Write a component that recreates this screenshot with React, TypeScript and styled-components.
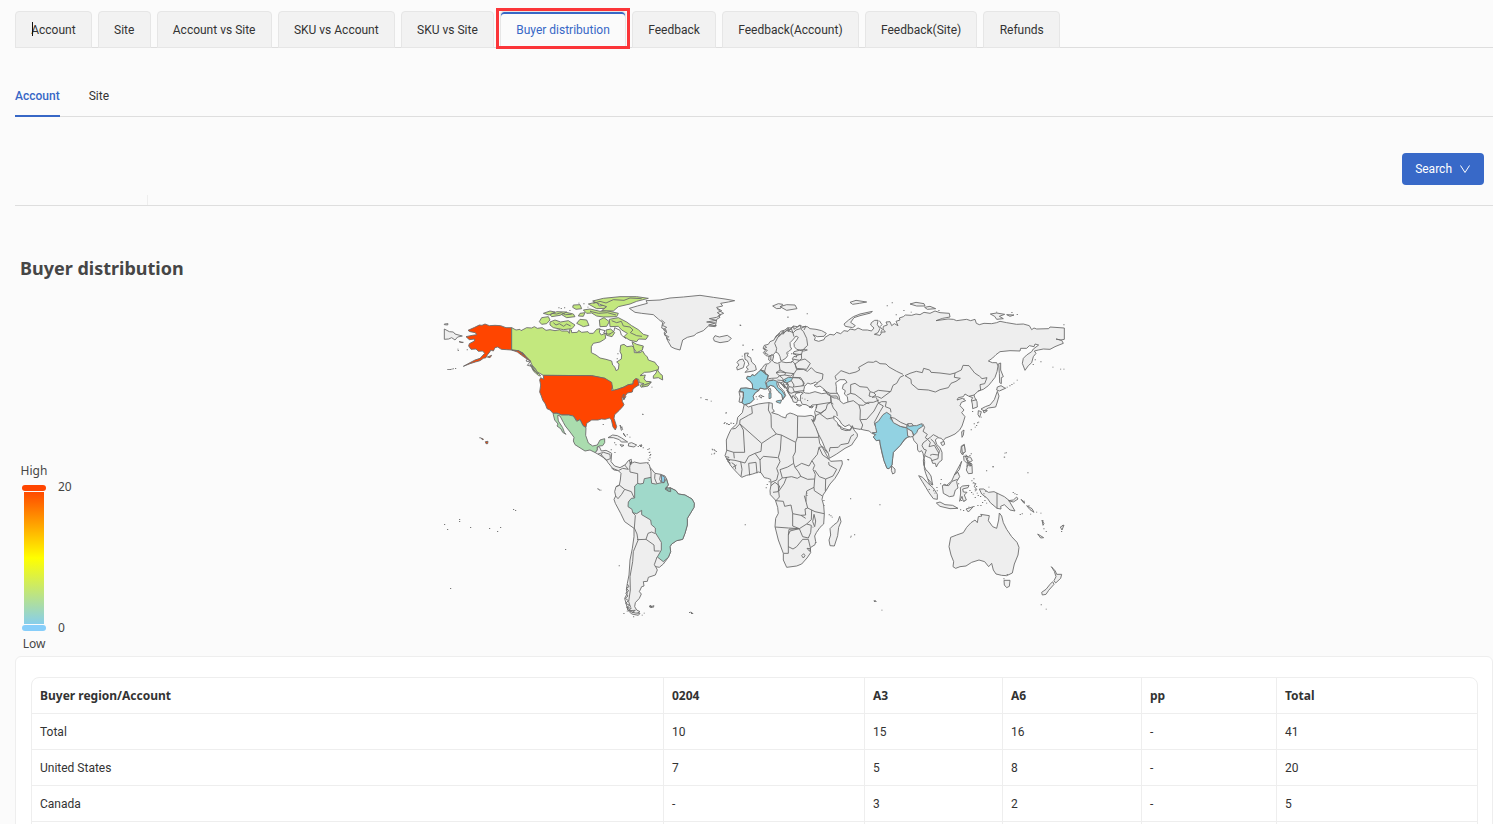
import React, { useState } from "react";
import styled, { createGlobalStyle, css } from "styled-components";

const GlobalStyle = createGlobalStyle`
  *, *::before, *::after { box-sizing: border-box; }
  body {
    margin: 0;
    background: #fbfbfb;
    color: #333;
    font: 12px/20px Roboto, "Noto Sans", sans-serif;
  }
  button { font: inherit; color: inherit; cursor: pointer; }
`;

const Page = styled.main`
  height: 100vh;
  overflow: hidden;
  padding: 11px 0 0 15px;
`;

const TabBar = styled.nav`
  border-bottom: 1px solid #dedede;
`;

const TabList = styled.div`
  display: flex;
  gap: 6px;
  max-width: 1045px;
  margin-bottom: -1px;
`;

const Tab = styled.button<{ $active?: boolean; $caret?: boolean }>`
  position: relative;
  flex: 1 0 auto;
  height: 37px;
  padding: 0 15px;
  border: 1px solid #e6e6e6;
  border-radius: 4px 4px 0 0;
  background: #f2f2f2;
  white-space: nowrap;
  ${(p) =>
    p.$active &&
    css`
      background: #fbfbfb;
      border-bottom-color: #fbfbfb;
      box-shadow: inset 0 2px #3767c6;
      color: #3767c6;
      &::after {
        content: "";
        position: absolute;
        z-index: 1;
        inset: -4px -5px -2px;
        border: 3px solid #fb3539;
      }
    `}
  ${(p) =>
    p.$caret &&
    css`
      &::before {
        content: "";
        position: absolute;
        left: 16px;
        top: 10px;
        width: 1px;
        height: 14px;
        background: #111;
      }
    `}
`;

const SubTabs = styled.nav`
  display: flex;
  gap: 29px;
  margin-top: 27px;
  border-bottom: 1px solid #dedede;
`;

const SubTab = styled.button<{ $active?: boolean }>`
  height: 42px;
  margin-bottom: -1px;
  padding: 2px 0 0;
  border: 0;
  border-bottom: 2px solid ${(p) => (p.$active ? "#3767c6" : "transparent")};
  background: none;
  color: ${(p) => (p.$active ? "#3767c6" : "#333")};
  font-weight: ${(p) => (p.$active ? 500 : 400)};
`;

const FilterPanel = styled.section`
  display: flex;
  justify-content: space-between;
  padding: 36px 9px 0 0;
  border-bottom: 1px solid #dedede;
`;

const FilterStub = styled.div`
  align-self: flex-end;
  width: 133px;
  height: 10px;
  border-right: 1px solid #eee;
`;

const SearchButton = styled.button`
  display: flex;
  align-items: center;
  gap: 7px;
  height: 32px;
  margin-bottom: 20px;
  padding: 0 13px;
  border: 0;
  border-radius: 4px;
  background: #3869c8;
  color: #fff;
`;

const ChartTitle = styled.h2`
  margin: 50px 0 10px 5px;
  color: #464646;
  font: bold 18px/24px "Noto Sans", sans-serif;
`;

const ChartArea = styled.section`
  display: grid;
  grid-template-columns: 1fr;
  padding-bottom: 4px;
  & > * { grid-area: 1 / 1; }
`;

const MapDrawing = styled.svg`
  justify-self: center;
  width: 628px;
  height: 330px;
  margin-bottom: 32px;
`;

const Legend = styled.div`
  display: grid;
  grid-template-columns: 28px auto;
  column-gap: 10px;
  place-content: end start;
  margin-left: 5px;
  color: #464646;
  font: 12px/16px "Noto Sans", sans-serif;
`;

const LegendEnd = styled.span`
  grid-column: 1;
  text-align: center;
`;

const Scale = styled.div`
  grid-column: 1;
  display: flex;
  flex-direction: column;
  align-items: center;
  gap: 1px;
  padding: 6px 0 5px;
`;

const Handle = styled.span<{ $color: string }>`
  width: 24px;
  height: 6px;
  border-radius: 3px;
  background: ${(p) => p.$color};
`;

const Gradient = styled.span`
  width: 20px;
  height: 132px;
  background: linear-gradient(#ff4a00, yellow 50%, #87ceeb);
`;

const ScaleLabels = styled.div`
  display: flex;
  flex-direction: column;
  justify-content: space-between;
`;

const Card = styled.section`
  padding: 20px 14px 20px 15px;
  border: 1px solid #eee;
  border-radius: 6px;
  background: #fff;
`;

const DataTable = styled.table`
  width: 100%;
  table-layout: fixed;
  border-collapse: separate;
  border-spacing: 0;
  border: 1px solid #eee;
  border-radius: 8px;
`;

const Column = styled.col<{ $width?: number }>`
  width: ${(p) => (p.$width ? `${p.$width}px` : "auto")};
`;

const cell = css`
  height: 36px;
  padding: 0 8px;
  border-bottom: 1px solid #eee;
  border-right: 1px solid #eee;
  text-align: left;
  &:last-child { border-right: 0; }
`;

const HeadCell = styled.th`
  ${cell}
  font: bold 12px/20px "Noto Sans", sans-serif;
`;

const Cell = styled.td`
  ${cell}
`;

/* Outlines are digitised at three units per map unit, each relative to a sheet's corner. */
type Sheet = [number, number];
const NA: Sheet = [440, 290];
const ATL: Sheet = [600, 290];
const EUR: Sheet = [720, 310];
const ASIA: Sheet = [850, 290];
const SAM: Sheet = [590, 440];
const AFR: Sheet = [715, 400];
const OCE: Sheet = [860, 420];

const pts = (s: Sheet, text: string) =>
  text
    .trim()
    .split(/\s+/)
    .map((p) => {
      const [x, y] = p.split(",").map(Number);
      return `${(s[0] + x / 3).toFixed(2)},${(s[1] + y / 3).toFixed(2)}`;
    })
    .join(" ");

const LAND = "#eeeeee";
const SEA = "#fbfbfb";

const eurasia = [
  pts(EUR, "57,245 62,235 78,234 98,237 97,222 90,213 80,206 82,199 92,200 96,194 104,197 115,187 122,180 128,172 135,163 146,161 152,155 146,150 147,138 156,135 160,140 156,150 162,157 172,160 184,155 198,158 212,157 220,152 217,146 222,139 230,141 228,134 219,131 222,125 238,121 252,123 262,120 256,118 240,120 230,118 223,110 222,100 230,90 235,82 228,78 218,90 210,98 211,110 215,117 206,124 200,128 203,137 197,145 187,151 182,151 180,140 175,130 167,126 160,134 148,139 138,137 130,128 136,121 129,115 133,106 145,103 150,95 162,90 168,78 176,72 182,64 195,60 203,53 213,54 220,48 232,50 240,45 247,50 262,50 270,56 288,58 305,62 319,70 312,79 292,80 279,74 286,83 283,90 296,94 312,89 315,82 330,73 342,75 350,67 362,71 372,62 384,64 390,57 405,60 414,54 428,60 442,60 455,63"),
  pts(ASIA, "66,121 72,114 62,105 64,98 74,91 84,91 82,104 90,116 84,128 73,133 90,136 96,126 106,126 99,117 100,109 112,105 108,96 120,95 125,107 133,101 144,107 138,94 150,90 148,84 160,80 166,75 185,76 198,72 210,74 222,67 240,70 255,63 270,68 298,70 300,81 278,85 258,92 294,87 310,88 320,92 350,88 362,92 375,88 379,100 388,104 402,100 425,101 440,98 450,94 470,98 500,103 520,102 538,107 545,119 552,114 560,117 596,116 600,111 643,114 643,148 632,150 618,147 635,151 640,160 627,165 615,170 600,178 580,177 565,180 553,183 558,190 550,200 545,218 535,227 525,241 517,220 520,205 530,195 545,185 550,177 566,165 555,162 552,170 538,167 530,175 512,175 510,183 480,182 450,185 438,194 428,204 415,213 427,218 440,218 444,228 441,245 435,262 425,275 415,287 400,298 385,303 372,315 374,322 381,335 382,351 368,356 367,342 364,330 368,323 355,318 345,312 340,320 325,323 321,330 337,325 347,332 334,337 330,347 342,360 335,368 345,380 341,393 336,408 329,420 315,432 300,439 285,445 280,452 274,445 263,443 256,450 260,463 270,473 276,487 276,510 266,518 259,531 256,520 248,520 243,505 235,502 225,497 220,510 221,525 228,540"),
  pts(OCE, "204,155 213,168 218,195 208,190 203,176 197,160 193,145 194,125 189,100 185,92 178,96 173,90 172,73 162,62 156,45 150,50 142,52 135,58 120,77 100,97 98,115 96,135 87,146 81,145 72,122 66,100 61,75 59,60 49,62 40,51 47,44 35,40 28,33 12,30 0,27"),
  pts(EUR, "420,358 408,356 395,353 388,344 375,350 365,342 358,330 347,320 341,318 342,328 352,338 355,348 361,350 363,357 378,362 390,360 397,347 402,360 412,372 412,380 402,394 395,405 375,415 350,432 328,445 325,430 315,415 307,395 294,370 286,352 280,340 273,328 283,334 287,320 284,307 290,290 291,284 276,285 270,291 258,284 247,283 241,270 242,255 250,249 242,247 228,250 225,256 234,267 230,278 220,276 214,260 205,248 202,236 192,227 182,219 173,216 178,229 192,244 197,257 188,269 186,255 174,244 162,229 152,226 142,236 133,237 120,234 117,241 106,248 99,259 102,268 91,279 74,284 66,278 57,276 60,260"),
].join(" ");

const africa = pts(AFR, "88,12 100,21 130,12 150,9 162,8 172,10 172,25 178,34 170,38 190,44 200,50 212,54 215,44 225,39 235,42 248,48 270,49 288,46 297,50 295,65 290,58 302,82 310,103 314,130 325,147 340,175 347,184 381,182 382,192 372,215 360,235 345,252 333,272 324,285 321,298 326,316 328,342 326,372 315,382 304,398 299,408 302,425 300,434 286,443 287,458 276,474 260,492 245,498 215,502 205,480 205,460 190,420 180,380 182,355 190,340 188,322 181,300 166,284 165,272 168,255 167,238 158,235 148,233 138,218 130,216 113,222 95,226 80,232 68,220 54,205 46,195 36,178 30,167 35,152 34,120 40,105 48,88 65,72 68,52 82,38");
const southAmerica = pts(SAM, "95,82 105,75 115,62 124,58 124,70 133,66 150,70 170,68 178,74 180,82 195,100 212,103 225,108 230,118 235,135 225,147 230,150 240,143 258,152 265,162 285,165 306,177 313,190 312,202 300,222 292,235 292,255 285,280 278,298 260,302 245,312 240,320 242,335 235,352 220,372 208,382 197,380 202,390 196,405 175,412 172,424 160,425 162,438 155,440 148,455 154,462 148,475 136,488 134,500 140,510 150,515 138,522 122,515 113,508 108,490 104,475 112,460 109,450 112,430 117,405 120,360 127,325 132,290 132,265 104,245 92,220 76,190 72,178 77,168 74,155 78,140 88,135 91,120 93,100 85,92 72,90 65,84 75,84 85,90");
const alaska = pts(NA, "215,113 198,113 182,107 165,106 148,107 135,102 126,106 118,105 104,112 84,121 90,125 106,128 110,134 97,136 78,140 88,149 104,147 103,153 88,161 86,168 93,178 108,177 115,184 128,183 134,190 120,205 105,210 90,218 70,229 90,221 106,216 120,212 130,205 138,203 142,195 150,185 152,180 160,183 165,173 173,171 184,178 200,179 215,180");
const canada = pts(NA, "215,113 228,120 240,118 243,122 260,113 275,114 283,110 292,115 307,113 318,121 330,119 345,122 360,119 364,123 383,123 388,130 388,119 394,120 395,128 412,127 416,121 425,127 444,125 448,130 460,130 470,118 480,116 478,127 484,135 495,130 497,145 490,150 480,156 460,160 454,170 454,188 468,195 480,204 498,208 515,213 518,225 525,232 528,242 535,238 537,222 530,216 544,207 545,195 540,185 542,166 552,163 561,170 575,168 582,172 583,188 600,188 608,183 614,193 622,201 625,210 645,217 650,225 656,230 655,239 630,246 613,247 600,257 610,256 616,255 612,266 618,274 632,275 630,280 618,283 604,292 600,286 612,281 598,278 596,268 587,266 580,273 579,282 565,284 552,291 535,297 520,303 515,285 495,265 480,262 455,257 310,256 303,252 290,245 287,237 276,225 270,212 258,200 248,189 235,182 215,180");
const usa = pts(NA, "302,263 311,268 310,256 455,257 480,262 495,265 515,277 517,290 515,302 535,297 552,291 565,284 579,282 580,273 587,266 593,268 597,285 588,290 579,297 577,306 562,309 557,316 553,327 546,322 547,334 552,344 548,350 538,361 524,374 522,385 530,410 526,420 519,411 514,389 508,384 496,388 484,387 474,390 455,390 440,400 438,412 429,407 420,389 413,395 400,378 386,375 365,375 351,369 339,370 330,360 321,356 316,342 308,330 304,318 299,306 302,285 299,270");
const mexico = pts(NA, "339,370 351,370 365,375 386,375 400,378 410,394 420,389 429,407 438,413 437,436 445,459 458,468 472,465 480,450 494,446 494,458 488,467 478,468 472,471 472,480 466,488 450,480 435,483 405,464 400,453 402,442 388,423 376,408 370,397 360,378 353,376 355,393 368,413 373,427 378,433 368,427 363,417 351,408 354,402 344,390");
const greenland = pts(ATL, "88,55 112,48 142,40 138,32 180,30 210,24 250,21 300,16 340,22 375,27 404,32 385,36 362,40 368,48 350,52 355,60 371,70 356,76 360,82 350,88 346,110 325,108 310,122 290,130 282,137 262,142 248,150 240,180 225,176 214,171 203,152 198,138 192,129 199,120 185,114 188,98 176,88 160,74 125,70 105,67");
const australia = pts(OCE, "272,352 290,345 310,338 320,322 333,308 345,300 352,308 355,290 366,288 362,283 388,287 385,302 398,320 410,325 416,300 418,279 425,288 430,308 440,328 455,350 471,367 477,382 474,405 463,432 457,459 440,467 425,466 408,462 400,450 395,430 386,440 374,425 357,420 335,427 318,438 300,440 287,445 279,440 281,425 273,405 267,380");
const brazil = pts(SAM, "143,130 150,132 160,130 163,116 183,112 185,130 197,132 215,128 222,128 229,116 235,135 225,147 230,150 240,143 258,152 265,162 285,165 306,177 313,190 312,202 300,222 292,235 292,255 285,280 278,298 260,302 245,312 240,320 242,335 235,352 220,365 202,351 214,330 214,307 196,278 196,264 184,254 182,240 155,224 155,211 140,221 128,218 126,208 114,200 115,186 124,175 134,174 134,138");

type Shape = [string, string?];
const countries: Shape[] = [
  [eurasia], [africa], [southAmerica], [greenland], [australia],
  [alaska, "#ff4500"], [canada, "#c3e87e"], [usa, "#ff4500"], [mexico, "#aadcae"],
  // Canadian Arctic
  ...[
    "298,95 305,83 325,80 330,90 320,101 305,103",
    "330,96 345,90 362,96 385,92 405,105 396,116 370,119 340,113 330,105",
    "410,100 420,88 440,90 447,106 430,110",
    "362,72 378,67 400,72 405,80 380,83", "330,74 350,65 380,66 360,76 335,80",
    "310,70 330,63 345,66 327,75", "400,45 420,44 425,56 408,58 398,52",
    "420,70 435,68 430,79 415,78", "430,60 450,57 480,64 500,62 535,70 530,80 490,81 470,78 455,69 440,70",
    "445,42 470,36 478,48 500,44 495,55 470,56", "458,33 490,25 540,20 590,20 625,25 590,34 570,42 535,50 520,63 485,62 500,50 480,43",
    "478,90 492,83 508,95 500,109 480,110", "508,88 535,83 560,96 575,107 595,119 610,133 625,137 618,148 596,147 590,155 570,151 552,140 562,130 545,120 535,109 510,110",
    "498,120 512,117 524,128 516,140 500,136", "576,155 590,163 610,168 607,180 590,188 582,176",
    "640,258 648,249 652,239 660,251 667,256 668,270 655,263 640,265", "270,223 280,232 302,258 296,257 281,244",
    "608,286 620,283 634,276 624,288 607,291",
  ].map((d): Shape => [pts(NA, d), "#c3e87e"]),
  ...[
    "215,180 235,182 248,189 258,200 272,214 262,208 245,196 232,186", "136,455 144,454 143,461 138,461",
    "122,444 130,447 129,450", "57,155 70,157 66,158", "142,201 155,196 150,203",
  ].map((d): Shape => [pts(NA, d), "#ff4500"]),
  // Chukotka wrap-around, Central America and the Caribbean
  ...[
    "13,117 28,125 40,126 45,132 67,138 53,141 45,150 35,143 26,147 13,148", "13,102 24,101 23,105 13,104",
    "466,488 472,480 472,471 478,470 484,483 498,481 510,487 515,490 513,515 524,528 540,533 554,525 565,538 548,535 535,542 518,535 504,518 498,508 480,496",
    "504,443 518,435 532,437 545,444 563,456 544,456 538,449 520,443", "566,460 575,458 590,465 582,471 565,468",
    "540,464 552,466 545,470", "598,466 606,467 603,471", "540,405 548,418 544,421", "550,429 557,440 552,435",
  ].map((d): Shape => [pts(NA, d)]),
  [pts(ATL, "340,145 345,137 358,141 382,136 394,145 385,154 360,158 343,153")],
  ...["518,48 535,41 548,43 542,55 530,56", "540,50 560,44 585,45 591,56 560,61"].map((d): Shape => [pts(ATL, d)]),
  // Britain, Ireland and Mediterranean islands
  ...[
    "74,130 85,129 82,138 92,143 95,156 106,166 109,179 100,183 75,187 85,177 78,172 87,164 82,152 75,148",
    "57,150 68,147 74,158 70,173 52,180 50,171 57,165 51,157", "153,135 161,136 158,151 152,150",
    "116,259 121,255 128,258 124,263", "267,291 280,289 276,294", "228,283 245,286 238,289",
    "145,237 151,235 153,244 149,247",
  ].map((d): Shape => [pts(EUR, d)]),
  ...[
    "82,199 92,200 96,194 104,197 115,187 122,180 133,187 145,196 141,209 136,217 142,236 133,237 120,234 117,241 98,237 97,222 90,213 80,206",
    "62,235 78,234 98,237 117,241 106,248 99,259 102,268 91,279 74,284 66,278 70,260 70,246 60,245",
    "139,218 150,211 160,210 172,214 170,220 173,232 186,242 195,256 188,269 186,255 174,244 162,229 152,226 142,232",
    "147,249 153,248 153,264 147,266", "169,273 185,270 181,280 169,276",
    "190,210 205,202 218,203 214,212 200,219 190,216",
  ].map((d): Shape => [pts(EUR, d), "#92d2e2"]),
  [pts(EUR, "122,180 134,184 137,192 128,185"), "#a0d9ca"],
  // Russian Arctic, Japan, Sakhalin
  ...[
    "-18,102 -4,90 10,80 30,72 67,64 62,69 30,77 12,83 2,97 16,107 8,113 -14,109", "180,42 198,37 222,41 225,48 200,48",
    "224,52 240,49 257,56 232,58", "421,72 440,69 464,73 448,79 460,86 440,88 434,79", "470,74 492,75 480,79",
    "0,37 18,31 50,36 28,40 8,43", "446,221 452,219 452,240 460,260 454,263 454,281 449,278 448,250",
    "442,291 453,287 466,295 448,303 440,300", "442,304 447,318 441,339 437,351 415,354 402,363 393,357 406,350 420,345 433,329 438,315",
    "385,362 394,365 389,382 384,374", "400,362 412,362 402,369", "272,458 282,454 284,463 277,467", "335,425 342,420 340,435 336,442",
    "334,468 343,463 345,480 338,495 332,487", "341,498 352,500 360,514 351,520 342,511", "352,515 366,522 363,538 351,531",
  ].map((d): Shape => [pts(ASIA, d)]),
  [pts(ASIA, "75,400 85,394 99,374 110,367 123,376 121,386 132,397 151,409 170,414 171,403 181,407 200,407 215,401 218,409 204,418 200,428 192,436 186,424 174,417 176,440 165,446 150,467 130,487 128,505 126,525 117,536 111,535 102,512 91,465 89,450 79,452 70,441 77,434 67,428 80,427 77,413"), "#92d2e2"],
  [pts(ASIA, "123,382 134,385 152,397 171,405 170,413 151,409 130,398")],
  [pts(ASIA, "173,401 186,401 190,407 176,409")],
  [pts(ASIA, "171,415 186,424 191,438 182,441 173,438")],
  // Indonesia, Philippines, Oceania
  ...[
    "95,138 105,147 105,158 98,162 94,151", "176,167 188,172 202,188 220,204 232,223 232,238 220,236 207,218 198,203 187,185",
    "229,249 240,246 255,254 278,256 294,265 270,266 240,259", "247,197 254,193 260,196 275,183 284,163 294,157 299,170 290,185 294,204 286,210 281,228 268,230 250,220",
    "301,203 308,198 327,196 324,203 308,207 310,216 321,217 313,225 319,240 310,244 306,229 299,244 302,219",
    "358,207 371,207 385,217 402,215 433,230 448,242 451,249 465,273 450,270 433,254 422,259 423,267 411,265 391,248 383,236 365,222",
    "445,242 460,240 470,231 474,237 460,246", "305,80 313,75 316,96 307,100", "316,108 332,112 337,122 325,129", "323,135 336,137 337,160 325,161 319,150",
    "283,165 302,130 305,124 298,149", "318,267 340,260 325,276", "432,481 450,481 448,499 440,503 433,495",
    "574,440 586,453 590,463 605,463 602,475 587,489 582,482 588,470 583,454", "578,485 582,493 566,511 558,523 547,525 545,517 558,508 570,493",
    "483,238 495,248 492,250", "500,257 516,266 522,277 510,269", "533,342 551,353 542,354", "546,300 552,311 549,316", "601,321 612,315 606,330",
  ].map((d): Shape => [pts(OCE, d)]),
  [pts(AFR, "374,349 378,365 371,382 368,407 358,438 345,437 342,420 347,405 345,386 356,375 368,366")],
  [brazil, "#a0d9ca"],
  [pts(SAM, "214,105 225,112 222,128 215,126"), "#87ceeb"],
  [pts(SAM, "228,142 242,145 242,155 233,153"), "#83b5a8"],
  [pts(SAM, "112,502 122,515 136,519 150,520 145,526 125,522 113,510")],
  [pts(SAM, "177,499 183,496 182,503")],
  [pts(SAM, "183,500 192,497 190,502")],
  // Caspian and Black seas
  [pts(EUR, "347,218 360,209 375,209 381,217 370,224 367,236 376,242 373,252 382,260 384,276 370,281 360,273 357,258 349,245 349,230"), SEA],
  [pts(EUR, "250,245 254,229 263,219 271,222 279,220 286,216 292,221 282,226 290,231 300,228 315,240 320,249 305,251 285,245 268,250 256,249"), SEA],
];

const borders: string[] = [
  // Europe
  ...[
    "57,245 70,246 70,260 66,278", "133,187 137,172 140,164", "145,196 141,209 152,212 160,210", "122,180 134,184 137,193 145,196",
    "177,160 180,180 168,188 178,197 172,204 154,205 145,206", "180,180 197,188 222,191 230,179 225,162 218,154 212,158",
    "168,188 182,186 197,188 194,195 178,197 188,205 190,212 172,210", "194,195 212,198 222,191", "218,203 236,204 248,212 252,228",
    "200,219 207,230 218,232 223,246 240,243 253,242", "214,212 222,225 220,231 252,227", "182,219 192,214 205,222 201,236",
    "207,230 203,243 213,250 224,246 240,248", "222,191 218,202 242,203 253,220 245,228", "230,179 250,178 262,184 274,173 287,186 309,192 307,208 291,219",
    "225,162 230,175 260,178 271,160 255,147 240,151 225,162", "218,147 238,151 245,146 244,132 229,137", "219,131 244,134 248,121",
    "168,126 170,115 164,100 174,81 187,70 202,61 214,56 218,66 222,80", "202,61 220,68 228,60 241,56 250,64 260,85 263,106 250,118",
    "309,240 330,250 352,250", "320,251 332,259 333,277 290,284 288,294 291,292", "332,259 342,264 350,264 356,270", "318,247 335,258 350,258 355,266",
  ].map((d) => pts(EUR, d)),
  // Middle East and Central Asia
  ...[
    "333,277 322,283 318,298 302,309 288,304", "303,309 287,317 284,330", "333,277 340,294 350,306 352,318", "318,298 301,312 321,327 341,323", "340,282 334,277 332,260",
    "328,425 330,413 355,412 362,404 385,400 393,379 402,373", "353,342 369,355 391,361 397,349", "384,276 400,272 417,285 421,300 420,329 428,345 424,357",
    "421,329 440,328 462,303 474,280 485,275", "417,285 430,286 445,277 460,277 477,270", "381,255 392,250 405,253 425,268 435,278 448,281",
    "349,210 345,199 363,182 388,191 408,186 419,180 416,172 444,156 460,157 468,153 480,161 498,162 507,171 530,184 549,193",
    "392,250 392,224 405,220 420,230 442,232 450,245 461,248 475,241 512,245 519,226 530,220 540,202 552,196",
    "461,248 468,255 456,262 473,260 484,265 511,245", "450,246 447,258 455,260", "485,275 499,275 496,290 511,296 513,307", "469,263 476,280 490,288 480,305 463,337 465,347",
  ].map((d) => pts(EUR, d)),
  // East and South Asia
  ...[
    "165,257 180,250 199,244 217,248 221,235 239,240 243,247 270,249 300,253 315,249 313,262 331,265 318,274 303,280 295,293 270,299 256,306 235,300 204,298 184,281 183,268 165,257",
    "315,249 334,240 339,226 357,227 374,249 389,259 396,266 411,263 404,281 390,284 392,300 384,304", "372,315 357,319", "365,333 380,329",
    "218,401 224,412 219,424 232,433 226,443 233,448 219,459 216,467", "232,448 242,441 250,434 265,442", "233,448 241,457 237,470 253,466 266,489 264,506 245,512", "240,496 248,493 265,495", "216,467 222,478 229,480 223,497", "242,447 251,455 268,482 267,490",
  ].map((d) => pts(ASIA, d)),
  pts(OCE, "411,219 411,265"), pts(OCE, "250,195 266,197 276,184 293,178"), pts(OCE, "203,176 218,193"),
  // Africa
  ...[
    "110,20 112,40 100,46 75,60 74,72 62,85 52,87", "75,72 140,130 170,110 184,102 169,82 168,45 160,30 162,8", "85,90 89,157 56,157 34,150", "85,90 75,72",
    "248,48 247,112 310,112", "247,112 242,127 199,105 184,102", "242,127 241,156 234,170 236,190 240,202", "199,105 196,150 190,172 195,185 185,205 190,220 185,240 168,247",
    "140,130 138,154 120,160 101,169 90,189 75,185 60,181 35,178", "101,190 104,226", "101,190 123,187 126,220", "120,160 135,180 137,218", "135,180 145,169 188,173",
    "77,185 81,208 78,230", "56,157 58,175", "65,195 53,202", "50,188 60,195 62,208", "195,209 218,201 236,190", "195,209 202,234 189,244 191,274 207,251 215,231",
    "202,234 230,230 247,235 257,229 278,238 299,237 297,262 275,273", "240,202 250,215 258,230", "240,202 260,190 282,198 291,182 299,196 294,208 301,223 299,237",
    "291,182 307,163 312,142 323,165 342,178", "312,142 323,140 338,160", "299,210 313,230 332,237 354,228 365,208 342,195 341,186", "332,237 331,273",
    "297,262 298,272 322,288", "275,273 273,290 273,305 278,324 300,335 327,341", "273,305 268,287", "191,274 193,291 183,302 205,304 209,319 228,315 233,341 258,346 272,355",
    "258,346 272,345 270,327 278,324", "233,341 233,378 253,386 275,372 289,359 290,330", "180,381 220,384 252,386 225,393 220,405 220,460 206,460",
    "220,405 222,388 253,386 263,410 280,414 287,398 289,376 275,372", "220,440 234,447 245,440 263,418 280,418 286,443", "297,343 302,363 299,380 293,365 297,343", "276,445 286,446 284,454 276,445",
    "260,467 266,461 270,467 265,474 260,467", "168,257 180,247 194,258 189,275 174,277",
  ].map((d) => pts(AFR, d)),
  // South and Central America
  ...[
    "122,66 119,82 120,96 143,101 143,130", "180,82 183,95 183,113", "195,101 194,115 200,130", "212,103 209,118 214,128",
    "78,140 89,136 104,148 95,163 84,176 77,168", "104,148 124,155 132,173", "128,218 136,226 133,264 141,282 144,301 130,335 128,365 120,410 121,450 116,485 122,502",
    "141,299 168,298 174,280 185,276 196,281", "168,298 192,315 193,333 209,333", "201,351 193,374 197,381", "24,42 41,37 60,43 61,56 48,61 34,44", "36,41 32,47",
  ].map((d) => pts(SAM, d)),
  // ragged coasts
  pts(ATL, "184,90 194,98 187,106 200,112 190,119 201,126 192,134 206,140 200,147 210,151"),
  pts(ATL, "352,55 365,62 352,68 362,75 350,82 328,86 349,91 320,96 346,99 326,105 350,107"),
  pts(EUR, "165,85 178,70 176,80 190,63 189,73 205,54 204,65 221,49 222,58 240,46 243,55 258,48 252,60"),
  pts(EUR, "134,107 140,112 131,116 142,121 134,129 145,134"),
  pts(EUR, "178,215 195,235 190,220 207,248 200,240 215,265 219,256 228,268 222,260"),
  pts(SAM, "112,432 117,440 109,444 116,453 107,459 114,468 106,475 115,482 107,490 119,496 110,502 124,505 115,512 136,511 126,518"),
  pts(NA, "235,181 249,196 246,187 262,207 258,213 270,216 262,226 276,229 284,244 277,235 294,252"),
  pts(NA, "480,118 495,122 491,129 508,133 522,124 524,113 540,121 544,135 558,146"),
  pts(NA, "340,98 348,105 358,101 371,109 380,102 392,108"),
  pts(NA, "335,70 350,72 364,68 376,74 395,73"), pts(NA, "460,40 480,34 498,39 520,29 552,31 570,24 605,26"), pts(NA, "450,64 476,70 502,68 528,75"),
  pts(NA, "515,92 530,98 544,94 550,108 570,111 579,120 571,128 590,137 606,139"),
  pts(NA, "546,320 552,312 551,330 558,319"),
  pts(AFR, "33,170 42,172 36,178 45,181 38,184 47,190"),
  pts(SAM, "118,60 122,75 125,64 120,72"),
  pts(OCE, "318,104 324,112 320,120 328,124 324,132 333,130 330,140"),
  pts(OCE, "340,186 346,192 343,200 350,208 346,214"),
  pts(ASIA, "88,92 96,104 90,110 97,118 92,128"),
];

const specks: [Sheet, string][] = [
  [NA, "22,237 26,237 30,237 34,236 38,235 45,234 52,176 53,180 80,178 118,442 606,371 522,457 526,463 593,468 608,472 626,475 628,485 630,492 628,502 626,510 622,516 634,290 430,40 442,50 415,38 355,52 362,54 372,52 388,60 450,62 545,410 560,433 568,440 488,402 530,205 532,190 508,130 606,172 612,262"],
  [ATL, "419,104 428,164 456,178 301,322 316,327 320,328 332,332 377,367 373,396 380,400 386,402 393,398 399,399 127,372 335,476 343,480 341,490 333,491 470,326 482,322 562,80 620,70"],
  [EUR, "59,44 67,104 96,118 202,20 383,448 261,270 253,266 245,263 235,270 195,210 197,222 72,133 65,137 203,128 213,130 107,259 129,258"],
  [ASIA, "110,46 125,37 137,73 160,60 182,65 571,214 607,230 630,236 640,236 640,103 554,208 548,222 465,293 470,290 478,286 484,282 490,278 500,269 381,397 374,410 362,418 463,488 461,500 428,529 392,380 366,363 340,325 265,60 484,66 500,72 438,65"],
  [OCE, "378,151 397,139 502,157 437,97 432,110 58,253 41,541 44,541 46,543 42,543 64,569 542,553 557,566 341,10 348,15 354,5 338,188 345,190 348,198 344,208 350,218 338,221 328,210 333,216 353,225 360,228 344,231 373,229 373,240 378,248 366,246 340,175 334,181 242,177 240,190 229,201 230,211 300,268 309,270 325,260 340,258 352,255 361,255 311,242 485,280 479,282 528,275 541,278 491,242 505,256 510,281 463,220 458,216 469,222 550,325 557,333 547,301 440,462 430,475 332,100 328,105 321,120 326,132 206,207 215,192 223,218 219,211 385,200 376,213 370,220 303,240 294,190"],
  [AFR, "31,38 26,69 33,70 39,72 45,68 152,262 155,252 161,244 89,373 341,343 346,346 350,350 405,410 407,407 417,403 405,295 397,177 399,178 274,278 274,285 325,300 325,315 292,380 301,426 2,153 -4,148"],
  [SAM, "22,145 25,147 27,149 31,149 86,376 300,515 303,516 306,519 110,512 62,28 73,36 152,13 172,27 176,36 178,45 173,56 100,519 129,529 155,524 161,518 366,28 372,38"],
];

const farSpecks = "459,519 459,521 470,527 489,528 497,531 500,527 513,509 515,510 444,524 447,529 565,549 450,588 740,325 1062,525 1061,531 650,606 651,607 691,613 689,612";

const speckPath = (points: string) =>
  points.split(" ").map((p) => `M${p}h1.200v.9h-1.200z`).join("");

const WorldMap = () => (
  <MapDrawing viewBox="440 290 628 330" role="img" aria-label="World map of buyers by country">
    <g stroke="#6c6c6c" strokeWidth=".9" strokeLinejoin="round">
      {countries.map(([points, fill], i) => (
        <polygon key={i} points={points} fill={fill ?? LAND} />
      ))}
      {borders.map((points, i) => (
        <polyline key={i} points={points} fill="none" />
      ))}
    </g>
    <g fill="#777">
      {specks.map(([sheet, text], i) => (
        <path key={i} d={speckPath(pts(sheet, text))} />
      ))}
      <path d={speckPath(farSpecks)} />
    </g>
  </MapDrawing>
);

const tabs = ["Account", "Site", "Account vs Site", "SKU vs Account", "SKU vs Site", "Buyer distribution", "Feedback", "Feedback(Account)", "Feedback(Site)", "Refunds"];
const head = ["Buyer region/Account", "0204", "A3", "A6", "pp", "Total"];
const rows = [
  ["Total", "10", "15", "16", "-", "41"],
  ["United States", "7", "5", "8", "-", "20"],
  ["Canada", "-", "3", "2", "-", "5"],
  ["", "", "", "", "", ""],
];

export default function App() {
  const [tab, setTab] = useState("Buyer distribution");
  const [view, setView] = useState("Account");
  return (
    <Page>
      <GlobalStyle />
      <TabBar>
        <TabList>
          {tabs.map((name, i) => (
            <Tab key={name} $active={name === tab} $caret={i === 0} onClick={() => setTab(name)}>
              {name}
            </Tab>
          ))}
        </TabList>
      </TabBar>
      <SubTabs>
        {["Account", "Site"].map((name) => (
          <SubTab key={name} $active={name === view} onClick={() => setView(name)}>
            {name}
          </SubTab>
        ))}
      </SubTabs>
      <FilterPanel>
        <FilterStub />
        <SearchButton>
          Search
          <svg width="12" height="12" viewBox="0 0 12 12" fill="none" stroke="#fff" strokeWidth="1">
            <path d="M1.500 2.500 6 9.500l4.500-7" />
          </svg>
        </SearchButton>
      </FilterPanel>
      <ChartTitle>Buyer distribution</ChartTitle>
      <ChartArea>
        <WorldMap />
        <Legend>
          <LegendEnd>High</LegendEnd>
          <Scale>
            <Handle $color="#ff4500" />
            <Gradient />
            <Handle $color="#87cefa" />
          </Scale>
          <ScaleLabels>
            <span>20</span>
            <span>0</span>
          </ScaleLabels>
          <LegendEnd>Low</LegendEnd>
        </Legend>
      </ChartArea>
      <Card>
        <DataTable>
          <colgroup>
            <Column />
            <Column $width={201} />
            <Column $width={138} />
            <Column $width={139} />
            <Column $width={135} />
            <Column $width={200} />
          </colgroup>
          <thead>
            <tr>
              {head.map((h) => (
                <HeadCell key={h} scope="col">{h}</HeadCell>
              ))}
            </tr>
          </thead>
          <tbody>
            {rows.map((row, r) => (
              <tr key={r}>
                {row.map((value, c) => (
                  <Cell key={c}>{value}</Cell>
                ))}
              </tr>
            ))}
          </tbody>
        </DataTable>
      </Card>
    </Page>
  );
}
